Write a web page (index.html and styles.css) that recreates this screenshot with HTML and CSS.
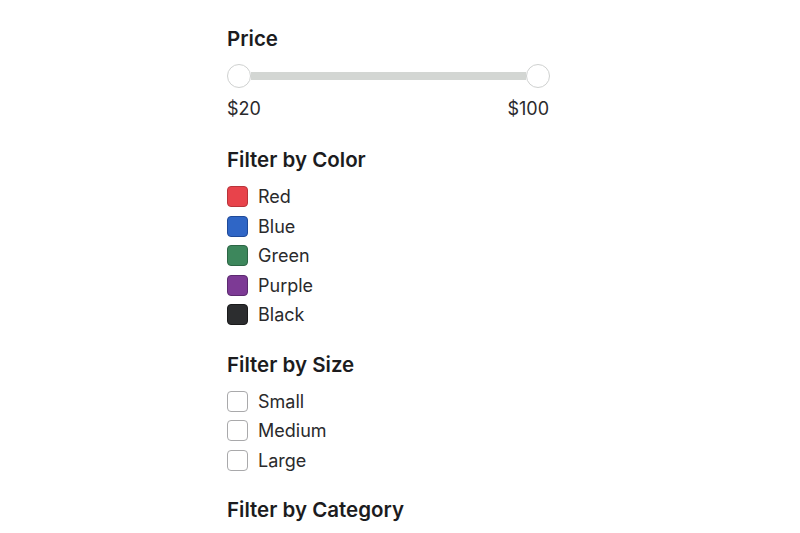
FILE: index.html
```html
<!DOCTYPE html>
<html lang="en">
<head>
    <meta charset="UTF-8">
    <title>Filters</title>
    <link rel="stylesheet" href="styles.css">
</head>
<body>
    <div id="filters">
        <div class="group price">
            <h3>Price</h3>
            <div class="range">
                <span class="thumb"></span>
                <span class="track"></span>
                <span class="thumb"></span>
            </div>
            <div class="range-labels">
                <span>$20</span>
                <span>$100</span>
            </div>
        </div>
        <div class="group">
            <h3>Filter by Color</h3>
            <ul class="options">
                <li><span class="box red"></span>Red</li>
                <li><span class="box blue"></span>Blue</li>
                <li><span class="box green"></span>Green</li>
                <li><span class="box purple"></span>Purple</li>
                <li><span class="box black"></span>Black</li>
            </ul>
        </div>
        <div class="group">
            <h3>Filter by Size</h3>
            <ul class="options">
                <li><span class="box"></span>Small</li>
                <li><span class="box"></span>Medium</li>
                <li><span class="box"></span>Large</li>
            </ul>
        </div>
        <div class="group">
            <h3>Filter by Category</h3>
        </div>
    </div>
</body>
</html>
```

FILE: styles.css
```css
*{
    margin: 0;
    padding: 0;
    box-sizing: border-box;
}
ul{
    list-style: none;
}
body{
    background: #fff;
    color: #1c1c1e;
    font-family: Inter, "Noto Sans", sans-serif;
}
#filters{
    width: 346px;
    margin: 0 auto;
    padding-top: 27px;
}
.group{
    margin-bottom: 23px;
}
.group.price{
    margin-bottom: 28px;
}
.group h3{
    font-size: 20.5px;
    font-weight: 600;
    line-height: 24px;
    margin-bottom: 10px;
}
.size h3{
    margin-bottom: 8px;
}
.range{
    width: 323px;
    margin-top: 13px;
    display: flex;
    align-items: center;
}
.range .thumb{
    width: 24px;
    height: 24px;
    border-radius: 50%;
    background: #fff;
    border: 1px solid #cfd1d0;
    flex: none;
}
.range .track{
    flex: 1;
    height: 8px;
    background: #d3d6d3;
}
.range-labels{
    width: 322px;
    display: flex;
    justify-content: space-between;
    font-size: 18px;
    line-height: 22px;
    margin-top: 10px;
    color: #2a2a2c;
}
.options li{
    display: flex;
    align-items: center;
    font-size: 18px;
    height: 29.5px;
    color: #2a2a2c;
}
.box{
    width: 21px;
    height: 21px;
    border-radius: 4px;
    border: 1px solid #a9a9ab;
    background: #fff;
    margin-right: 10px;
}
.red{
    background: #e8434b;
    border-color: #b8343a;
}
.blue{
    background: #2f66c6;
    border-color: #1f4a99;
}
.green{
    background: #3d875c;
    border-color: #2d6645;
}
.purple{
    background: #7d3a95;
    border-color: #5c2a70;
}
.black{
    background: #2c2d2f;
    border-color: #1a1a1b;
}
```
